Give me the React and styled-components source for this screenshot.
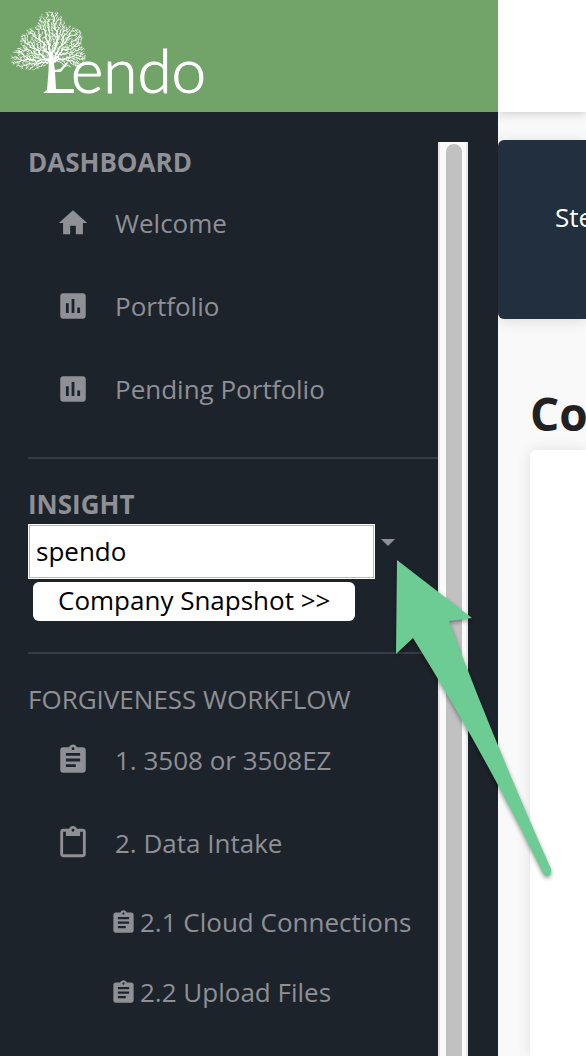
import React from 'react';
import styled, { createGlobalStyle } from 'styled-components';
import {
  MdHome,
  MdAssessment,
  MdAssignment,
  MdContentPaste,
} from 'react-icons/md';

const dashboardLinks = [
  { label: 'Welcome', icon: MdHome },
  { label: 'Portfolio', icon: MdAssessment },
  { label: 'Pending Portfolio', icon: MdAssessment },
];

const workflowLinks = [
  { label: '1. 3508 or 3508EZ', icon: MdAssignment },
  { label: '2. Data Intake', icon: MdContentPaste },
];

const intakeLinks = ['2.1 Cloud Connections', '2.2 Upload Files'];

// Ellipses that make up the crown of the logo tree: cx, cy, rx, ry
const crown = [
  [41, 14, 14, 15],
  [31, 29, 21, 15],
  [56, 27, 17, 14],
  [20, 46, 20, 12],
  [43, 38, 24, 12],
  [62, 43, 14, 13],
];

const inCrown = (x, y) => crown.some(([cx, cy, rx, ry]) => (
  ((x - cx) / rx) ** 2 + ((y - cy) / ry) ** 2 < 1
));

// Grows twigs outwards from the trunk, always joining the closest branch
const growTree = () => {
  let seed = 11;
  const random = () => {
    seed = (seed * 16807) % 2147483647;
    return seed / 2147483647;
  };

  const nodes = [];
  for (let y = 62; y >= 42; y -= 4) {
    nodes.push({ x: 42, y, length: 62 - y, parent: nodes.length - 1, load: 0 });
  }
  const trunk = nodes.length;

  const points = [];
  while (points.length < 1700) {
    const x = random() * 78;
    const y = random() * 64;
    if (inCrown(x, y)) {
      points.push({ x, y, d: Math.hypot(x - 42, y - 50) });
    }
  }
  points.sort((a, b) => a.d - b.d);

  points.forEach(({ x, y }) => {
    let best = 0;
    let bestCost = Infinity;
    nodes.forEach((node, i) => {
      const cost = Math.hypot(x - node.x, y - node.y) + node.length * 0.35;
      if (cost < bestCost) {
        bestCost = cost;
        best = i;
      }
    });
    const parent = nodes[best];
    const length = parent.length + Math.hypot(x - parent.x, y - parent.y);
    nodes.push({ x, y, length, parent: best, load: 1 });
  });

  for (let i = nodes.length - 1; i >= trunk; i -= 1) {
    nodes[nodes[i].parent].load += nodes[i].load;
  }

  return nodes.slice(trunk).map((node) => ({
    x1: nodes[node.parent].x,
    y1: nodes[node.parent].y,
    x2: node.x,
    y2: node.y,
    strokeWidth: Math.min(2.4, 0.38 + Math.sqrt(node.load) * 0.09),
  }));
};

const branches = growTree();

const Logo = () => (
  <Brand href="#home">
    <svg width="68" height="84" viewBox="0 0 68 84" overflow="visible" aria-hidden="true">
      <g stroke="#fff" strokeLinecap="round">
        {branches.map((branch, i) => <line key={i} {...branch} />)}
      </g>
      <path
        d="M39 40 L43 40 Q44 54 45 58 L50 57 L57 50 L58 51 L51 60 L45 60 L46 77 L64 77 L64 81 L33 81 L37 78 Q39 60 39 40 Z"
        fill="#fff"
      />
    </svg>
    <BrandName>endo</BrandName>
  </Brand>
);

const NavLink = ({ label, icon: Icon }) => (
  <li>
    <NavAnchor href="#nav">
      <Icon size={34} />
      {label}
    </NavAnchor>
  </li>
);

const App = () => (
  <Page>
    <GlobalStyle />
    <Sidebar>
      <SidebarHeader>
        <Logo />
      </SidebarHeader>
      <SidebarBody>
        <Nav>
          <Heading $bold>DASHBOARD</Heading>
          <List>
            {dashboardLinks.map((link) => <NavLink key={link.label} {...link} />)}
          </List>
          <Divider />

          <Heading $bold as="label" htmlFor="company">INSIGHT</Heading>
          <SearchRow>
            <SearchInput id="company" type="text" defaultValue="spendo" />
            <ToggleButton type="button" aria-label="Show companies">
              <svg width="14" height="7" viewBox="0 0 14 7">
                <path d="M0 0H14L7 7Z" fill="currentColor" />
              </svg>
            </ToggleButton>
          </SearchRow>
          <SnapshotButton type="button">Company Snapshot &gt;&gt;</SnapshotButton>
          <Divider />

          <Heading>FORGIVENESS WORKFLOW</Heading>
          <List>
            {workflowLinks.map((link) => <NavLink key={link.label} {...link} />)}
          </List>
          <SubList>
            {intakeLinks.map((label) => (
              <li key={label}>
                <SubAnchor href="#intake">
                  <MdAssignment size={27} />
                  {label}
                </SubAnchor>
              </li>
            ))}
          </SubList>
        </Nav>
        <ScrollTrack>
          <ScrollThumb />
        </ScrollTrack>
      </SidebarBody>
    </Sidebar>

    <Main>
      <TopBar />
      <StepCard>Ste</StepCard>
      <Content>
        <Title>Co</Title>
        <Panel />
      </Content>
    </Main>

    <Pointer viewBox="0 0 160 322" aria-hidden="true">
      <path
        d="M3 2 L78 60 L55 63 Q97 176 157 311 Q158 316 154 318 Q151 319 149 315 Q90 194 19 80 L2 96 Z"
        fill="#6dcc94"
      />
    </Pointer>
  </Page>
);

export default App;

// Styling
const GlobalStyle = createGlobalStyle`
  * {
    box-sizing: border-box;
  }

  body {
    margin: 0;
    font-family: "Open Sans", "Noto Sans", sans-serif;
    font-size: 26px;
    background: #f9f9f9;
  }
`;

const Page = styled.div`
  position: relative;
  display: flex;
  height: 100vh;
  overflow: hidden;
`;

const Sidebar = styled.aside`
  display: flex;
  flex-direction: column;
  flex: 0 0 498px;
  min-width: 0;
  background: #1d232b;
  color: #8e9095;
`;

const SidebarHeader = styled.div`
  flex: none;
  height: 112px;
  padding: 12px 10px;
  background: #72a369;
`;

const Brand = styled.a`
  display: flex;
  align-items: flex-end;
  color: #fff;
  text-decoration: none;
`;

const BrandName = styled.span`
  margin-left: -7px;
  font-family: Lato, sans-serif;
  font-size: 62px;
  font-weight: 300;
  line-height: 54px;
  -webkit-text-stroke: 1px #fff;
`;

const SidebarBody = styled.div`
  display: flex;
  flex: 1;
  min-height: 0;
  padding: 30px 30px 0 28px;
`;

const Nav = styled.nav`
  flex: 1;
  min-width: 0;
  padding-top: 1px;
  overflow: hidden;
`;

const Heading = styled.h2`
  display: block;
  margin: 0;
  font-size: 26px;
  font-weight: ${(props) => (props.$bold ? 700 : 400)};
  line-height: 38px;
`;

const List = styled.ul`
  margin: 0;
  padding: 0;
  list-style: none;
`;

const NavAnchor = styled.a`
  display: flex;
  align-items: center;
  gap: 25px;
  height: 83px;
  padding-left: 28px;
  color: inherit;
  text-decoration: none;
  white-space: nowrap;
`;

const SubList = styled(List)`
  padding-top: 3px;
`;

const SubAnchor = styled.a`
  display: flex;
  align-items: center;
  gap: 3px;
  height: 70px;
  padding-left: 82px;
  color: inherit;
  text-decoration: none;
  white-space: nowrap;
`;

const Divider = styled.hr`
  height: 2px;
  margin: 27px 0 26px;
  border: 0;
  background: #363c43;
`;

const SearchRow = styled.div`
  display: flex;
  align-items: flex-start;
  gap: 6px;
  padding: 1px 43px 0 0;
`;

const SearchInput = styled.input`
  flex: 1;
  min-width: 0;
  height: 55px;
  padding: 0 7px 2px;
  border: 1px solid #fff;
  border-radius: 0;
  background: #fff;
  box-shadow: inset 0 0 0 1px #b8b8b8;
  color: #000;
  font: inherit;
`;

const ToggleButton = styled.button`
  display: flex;
  padding: 15px 0;
  border: 0;
  background: none;
  color: inherit;
`;

const SnapshotButton = styled.button`
  display: block;
  height: 39px;
  margin: 3px 0 31px 5px;
  padding: 0 25px 3px;
  border: 0;
  border-radius: 6px;
  background: #fff;
  color: #000;
  font: inherit;
  line-height: 36px;
`;

const ScrollTrack = styled.div`
  flex: 0 0 30px;
  padding: 2px 4px 0 6px;
  border: solid #e8e8e8;
  border-width: 0 2px;
  background: #fafafa;
`;

const ScrollThumb = styled.div`
  width: 16px;
  height: 100%;
  border-radius: 8px 8px 0 0;
  background: #c1c1c1;
`;

const Main = styled.main`
  display: flex;
  flex-direction: column;
  flex: 1;
  min-width: 0;
  overflow: hidden;
  white-space: nowrap;
`;

const TopBar = styled.header`
  flex: none;
  height: 112px;
  background: #fff;
  box-shadow: 0 1px 10px rgba(0, 0, 0, 0.2);
`;

const StepCard = styled.section`
  flex: none;
  margin-top: 28px;
  padding: 59px 0 84px 57px;
  border-radius: 6px 0 0 6px;
  background: #222f3f;
  box-shadow: 0 2px 14px rgba(0, 0, 0, 0.12);
  color: #fff;
  line-height: 36px;
`;

const Content = styled.section`
  display: flex;
  flex-direction: column;
  flex: 1;
  padding: 64px 0 0 32px;
`;

const Title = styled.h1`
  margin: 0 0 7px;
  color: #212121;
  font-size: 46px;
  line-height: 60px;
`;

const Panel = styled.div`
  flex: 1;
  border-radius: 6px 0 0 0;
  background: #fff;
  box-shadow: 0 0 14px rgba(0, 0, 0, 0.1);
`;

const Pointer = styled.svg`
  position: absolute;
  top: 558px;
  left: 394px;
  width: 160px;
  height: 322px;
  overflow: visible;
  pointer-events: none;
  filter: drop-shadow(0 2px 2px rgba(0, 0, 0, 0.4));
`;
